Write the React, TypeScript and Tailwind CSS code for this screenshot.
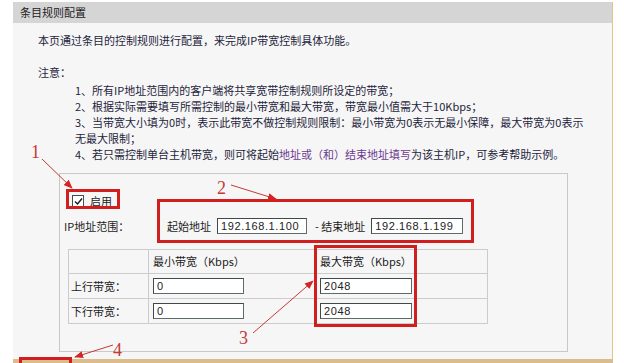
import React from "react";

const cjk = "font-[Noto_Sans_CJK_SC,sans-serif]";

function Field({ value, w }: { value: string; w: string }) {
  return (
    <div
      className={`${w} h-[16px] bg-white border border-[#5d6b6b] border-t-[#3e4a4a] border-l-[#3e4a4a] pl-[3px] text-[11px] leading-[14px] text-[#222] font-[Liberation_Sans,sans-serif] tracking-[0.6px]`}
    >
      {value}
    </div>
  );
}

function Annotations() {
  const red = "#d11f1f";
  const ink = "#c43a34";
  return (
    <svg
      className="absolute left-0 top-0 pointer-events-none"
      width={624}
      height={363}
      viewBox="0 0 624 363"
    >
      <defs>
        <marker id="ah" viewBox="0 0 10 10" refX="9" refY="5" markerWidth="9" markerHeight="9" orient="auto-start-reverse">
          <path d="M0 1 L10 5 L0 9 z" fill="#d42424" />
        </marker>
      </defs>
      <g fill="none" stroke={red} strokeWidth={3}>
        <rect x={67.5} y={190.5} width={51} height={17} />
        <rect x={158.5} y={200.5} width={314} height={41} />
        <rect x={315.5} y={246.5} width={100} height={79} />
        <rect x={20.5} y={358.5} width={50} height={12} />
      </g>
      <g stroke={ink} strokeWidth={1} fill="none">
        <line x1={42} y1={159} x2={72} y2={188} markerEnd="url(#ah)" />
        <line x1={231} y1={185} x2={276} y2={199} markerEnd="url(#ah)" />
        <line x1={253} y1={333} x2={313} y2={281} markerEnd="url(#ah)" />
        <line x1={113} y1={345} x2={75} y2={357} markerEnd="url(#ah)" />
      </g>
      <g fill={ink} fontFamily="Liberation Serif, serif" fontSize={18}>
        <text x={31} y={158}>1</text>
        <text x={217} y={194}>2</text>
        <text x={239} y={344}>3</text>
        <text x={113} y={356}>4</text>
      </g>
    </svg>
  );
}

export default function App() {
  return (
    <div className={`relative w-[624px] h-[363px] overflow-hidden bg-white ${cjk} text-[11px] text-[#1e1e3c]`}>
      <div className="ml-[13px] mt-[2px] w-[600px] h-[357px] flex flex-col border-r border-[#e2c488]">
        {/* header */}
        <div className="h-[21px] bg-[#d5d5d5] pl-[7px] leading-[21px] text-[11px] text-[#1c1c1c]">
          条目规则配置
        </div>

        {/* body */}
        <div className="flex-1 bg-[#f6f6f6] pt-[9px] pl-[25px]">
          <p className="leading-[16px]">本页通过条目的控制规则进行配置，来完成IP带宽控制具体功能。</p>
          <p className="mt-[16px] leading-[16px]">注意：</p>
          <div className="mt-[2px] pl-[37px] leading-[16px]">
            <p>1、所有IP地址范围内的客户端将共享宽带控制规则所设定的带宽；</p>
            <p>2、根据实际需要填写所需控制的最小带宽和最大带宽，带宽最小值需大于10Kbps；</p>
            <p>
              3、当带宽大小填为0时，表示此带宽不做控制规则限制：最小带宽为0表示无最小保障，最大带宽为0表示
              <br />
              无最大限制；
            </p>
            <p>
              4、若只需控制单台主机带宽，则可将起始
              <span className="text-[#6b3a8e]">地址或（和）结束地址填写</span>
              为该主机IP，可参考帮助示例。
            </p>
          </div>

          {/* rule box */}
          <div className="mt-[11px] ml-[21px] w-[509px] h-[179px] border border-[#c9c9c9] pl-[8px] pt-[20px] text-[#1c1c1c]">
            <div className="flex items-center h-[14px] ml-[4px]">
              <div className="w-[12px] h-[12px] border border-[#4b4b4b] bg-white flex items-center justify-center">
                <svg width="9" height="9" viewBox="0 0 9 9">
                  <path d="M1 4.5 L3.5 7 L8 1.5" fill="none" stroke="#1a1a1a" strokeWidth={1.4} />
                </svg>
              </div>
              <span className="ml-[6px]">启用</span>
            </div>

            <div className="mt-[10px] flex items-center h-[16px]">
              <span className="w-[103px] -ml-[4px]">IP地址范围：</span>
              <span className="mr-[6px]">起始地址</span>
              <Field value="192.168.1.100" w="w-[90px]" />
              <span className="ml-[8px] mr-[6px]">- 结束地址</span>
              <Field value="192.168.1.199" w="w-[92px]" />
            </div>

            <div className="mt-[15px] grid grid-cols-[80px_167px_172px] grid-rows-[24px_25px_25px] w-[420px] border-t border-l border-[#cccccc]">
              <div className="border-r border-b border-[#cccccc]" />
              <div className="border-r border-b border-[#cccccc] pl-[4px] flex items-center">最小带宽（Kbps）</div>
              <div className="border-r border-b border-[#cccccc] pl-[4px] flex items-center">最大带宽（Kbps）</div>

              <div className="border-r border-b border-[#cccccc] pl-[2px] flex items-center">上行带宽：</div>
              <div className="border-r border-b border-[#cccccc] pl-[4px] flex items-center">
                <Field value="0" w="w-[91px]" />
              </div>
              <div className="border-r border-b border-[#cccccc] pl-[4px] flex items-center">
                <Field value="2048" w="w-[92px]" />
              </div>

              <div className="border-r border-b border-[#cccccc] pl-[2px] flex items-center">下行带宽：</div>
              <div className="border-r border-b border-[#cccccc] pl-[4px] flex items-center">
                <Field value="0" w="w-[91px]" />
              </div>
              <div className="border-r border-b border-[#cccccc] pl-[4px] flex items-center">
                <Field value="2048" w="w-[92px]" />
              </div>
            </div>
          </div>
        </div>
      </div>
      <div className="ml-[13px] w-[600px] h-[6px] bg-[#dcbb8d]" />

      <Annotations />
    </div>
  );
}
